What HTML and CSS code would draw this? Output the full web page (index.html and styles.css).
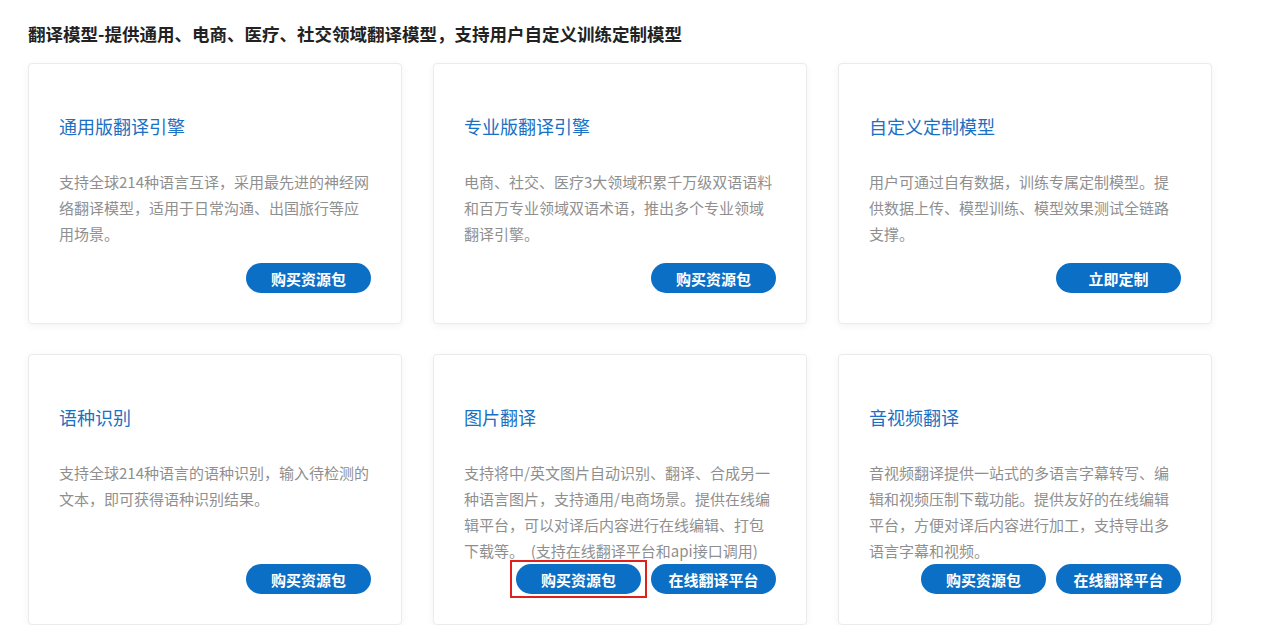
FILE: index.html
```html
<!DOCTYPE html>
<html lang="zh-CN">
<head>
  <meta charset="UTF-8">
  <meta name="viewport" content="width=device-width, initial-scale=1.0">
  <title>翻译模型</title>
  <link rel="stylesheet" href="styles.css">
</head>
<body>
  <div class="page">
    <h1>翻译模型-提供通用、电商、医疗、社交领域翻译模型，支持用户自定义训练定制模型</h1>

    <div class="cards">
      <!-- 通用版 -->
      <div class="card">
        <h2>通用版翻译引擎</h2>
        <p>支持全球214种语言互译，采用最先进的神经网络翻译模型，适用于日常沟通、出国旅行等应用场景。</p>
        <div class="actions">
          <button>购买资源包</button>
        </div>
      </div>

      <!-- 专业版 -->
      <div class="card">
        <h2>专业版翻译引擎</h2>
        <p>电商、社交、医疗3大领域积累千万级双语语料和百万专业领域双语术语，推出多个专业领域翻译引擎。</p>
        <div class="actions">
          <button>购买资源包</button>
        </div>
      </div>

      <!-- 自定义 -->
      <div class="card">
        <h2>自定义定制模型</h2>
        <p>用户可通过自有数据，训练专属定制模型。提供数据上传、模型训练、模型效果测试全链路支撑。</p>
        <div class="actions">
          <button>立即定制</button>
        </div>
      </div>

      <!-- 语种识别 -->
      <div class="card">
        <h2>语种识别</h2>
        <p>支持全球214种语言的语种识别，输入待检测的文本，即可获得语种识别结果。</p>
        <div class="actions">
          <button>购买资源包</button>
        </div>
      </div>

      <!-- 图片翻译 -->
      <div class="card">
        <h2>图片翻译</h2>
        <p>支持将中/英文图片自动识别、翻译、合成另一种语言图片，支持通用/电商场景。提供在线编辑平台，可以对译后内容进行在线编辑、打包下载等。&nbsp; (支持在线翻译平台和api接口调用)</p>
        <div class="actions">
          <span class="highlight"><button>购买资源包</button></span>
          <button>在线翻译平台</button>
        </div>
      </div>

      <!-- 音视频翻译 -->
      <div class="card">
        <h2>音视频翻译</h2>
        <p>音视频翻译提供一站式的多语言字幕转写、编辑和视频压制下载功能。提供友好的在线编辑平台，方便对译后内容进行加工，支持导出多语言字幕和视频。</p>
        <div class="actions">
          <button>购买资源包</button>
          <button>在线翻译平台</button>
        </div>
      </div>
    </div>
  </div>
</body>
</html>
```

FILE: styles.css
```css
* {
  box-sizing: border-box;
}

body {
  margin: 0;
  padding: 0;
  background: #fff;
  font-family: "Noto Sans CJK SC", "Noto Sans", sans-serif;
  color: #333;
}

.page {
  padding: 22px 28px 0 28px;
}

h1 {
  margin: 0 0 17px 0;
  font-size: 17.5px;
  line-height: 24px;
  font-weight: bold;
  color: #222;
}

.cards {
  display: grid;
  grid-template-columns: repeat(3, 374px);
  column-gap: 31px;
  row-gap: 30px;
}

.card {
  display: flex;
  flex-direction: column;
  padding: 49px 30px 30px 30px;
  background: #fff;
  border: 1px solid #ebebeb;
  border-radius: 4px;
  box-shadow: 0 2px 8px rgba(0, 0, 0, 0.05);
}

.card h2 {
  margin: 0;
  font-size: 18px;
  line-height: 26px;
  font-weight: normal;
  color: #1a70c2;
}

.card p {
  margin: 30px 0 0 0;
  min-height: 94px;
  font-size: 15px;
  line-height: 26px;
  color: #8f8f8f;
}

.actions {
  display: flex;
  justify-content: flex-end;
  gap: 10px;
  margin-top: auto;
}

.actions button {
  width: 125px;
  height: 30px;
  padding: 0;
  border: none;
  border-radius: 15px;
  background: #0b6fc6;
  color: #fff;
  font-family: inherit;
  font-size: 15px;
  font-weight: bold;
  cursor: pointer;
}

.actions button:hover {
  background: #0960ad;
}

.highlight {
  display: flex;
  margin: -4px -6px;
  padding: 2px 4px;
  border: 2px solid #e0201c;
}
```
